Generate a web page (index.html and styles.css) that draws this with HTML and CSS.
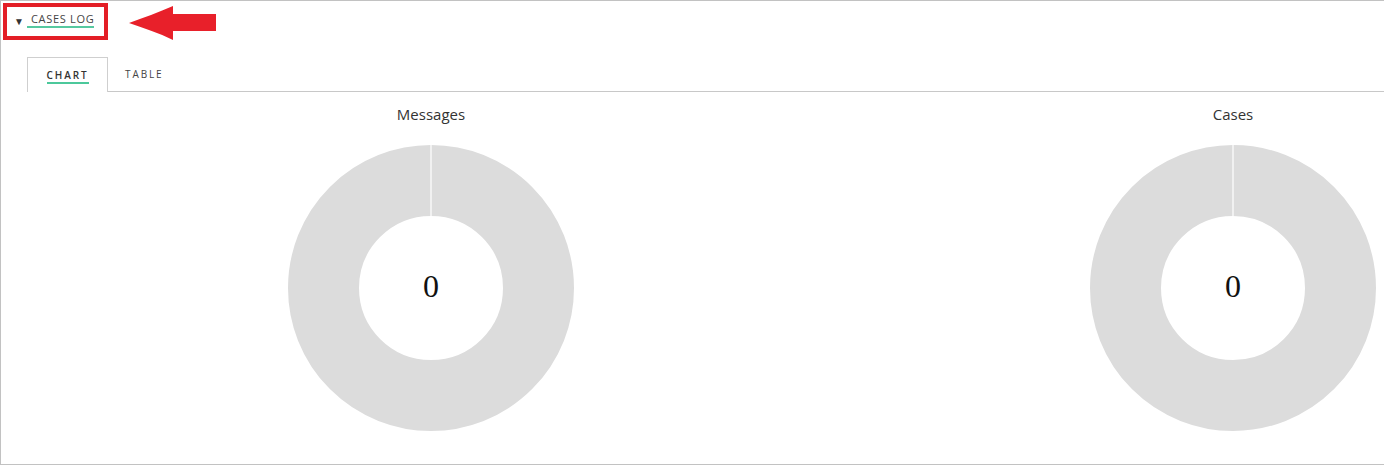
FILE: index.html
```html
<!DOCTYPE html>
<html>
<head>
<meta charset="utf-8">
<link rel="stylesheet" href="styles.css">
</head>
<body>
<div class="panel">
  <div class="header">
    <div class="highlight">
      <span class="caret">▼</span>
      <span class="title-link">CASES LOG</span>
    </div>
    <svg class="arrow" width="90" height="34" viewBox="0 0 90 34">
      <path d="M0 17 C14 12 30 6 44 0 L44 8 L87 8 L87 25 L44 25 L44 34 C30 27 14 22 0 17 Z" fill="#e8202a"/>
    </svg>
  </div>
  <div class="tabs">
    <div class="tab active"><span>CHART</span></div>
    <div class="tab"><span>TABLE</span></div>
  </div>
  <div class="charts">
    <div class="chart">
      <div class="chart-title">Messages</div>
      <div class="donut">
        <svg width="288" height="288" viewBox="0 0 288 288">
          <circle cx="144" cy="144" r="107.5" fill="none" stroke="#dcdcdc" stroke-width="71"/>
          <line x1="144" y1="0" x2="144" y2="72" stroke="#ffffff" stroke-width="1.2"/>
        </svg>
        <div class="donut-value">0</div>
      </div>
    </div>
    <div class="chart">
      <div class="chart-title">Cases</div>
      <div class="donut">
        <svg width="288" height="288" viewBox="0 0 288 288">
          <circle cx="144" cy="144" r="107.5" fill="none" stroke="#dcdcdc" stroke-width="71"/>
          <line x1="144" y1="0" x2="144" y2="72" stroke="#ffffff" stroke-width="1.2"/>
        </svg>
        <div class="donut-value">0</div>
      </div>
    </div>
  </div>
</div>
</body>
</html>
```

FILE: styles.css
```css
html, body {
  margin: 0;
  padding: 0;
  background: #ffffff;
  overflow: hidden;
}

.panel {
  box-sizing: border-box;
  width: 100%;
  height: 465px;
  border: 1px solid #c2c2c2;
  border-right: none;
  overflow: hidden;
  font-family: "Open Sans", "Liberation Sans", sans-serif;
  color: #333;
}

.header {
  display: flex;
  align-items: flex-start;
  padding: 2px 0 0 2px;
}

.highlight {
  box-sizing: border-box;
  width: 105px;
  height: 37px;
  border: 4px solid #e31e26;
  display: flex;
  align-items: center;
  padding: 0 0 2px 7px;
}

.caret {
  font-size: 10px;
  color: #333;
  line-height: 1;
  margin-right: 3px;
}

.title-link {
  font-family: "Open Sans", "Liberation Sans", sans-serif;
  font-size: 11px;
  letter-spacing: 0.7px;
  color: #444;
  padding: 0 0 1px 4px;
  border-bottom: 2px solid #56c9a0;
  line-height: 12px;
}

.arrow {
  margin-left: 21px;
  margin-top: 3px;
}

.tabs {
  display: flex;
  margin: 17px 0 0 26px;
  border-bottom: 1px solid #c8c8c8;
  height: 34px;
}

.tab {
  box-sizing: border-box;
  height: 34px;
  font-size: 10px;
  letter-spacing: 1.9px;
  color: #444;
  display: flex;
  justify-content: center;
  padding-top: 10px;
}

.tab.active {
  width: 81px;
  border: 1px solid #cfcfcf;
  border-bottom: none;
  height: 35px;
  background: #fff;
  padding-top: 11px;
  padding-left: 0;
  font-weight: 600;
  color: #333;
}

.tab.active span {
  height: 12px;
  border-bottom: 2px solid #4cc89b;
  line-height: 12px;
  padding-bottom: 1px;
}

.tab:not(.active) {
  padding-left: 17px;
}

.charts {
  display: grid;
  grid-template-columns: 802px 802px;
  margin-left: 29px;
  margin-top: 12px;
}

.chart {
  display: flex;
  flex-direction: column;
  align-items: center;
}

.chart-title {
  font-size: 15px;
  line-height: 20px;
  color: #333;
  margin-bottom: 20px;
}

.donut {
  position: relative;
  width: 288px;
  height: 288px;
}

.donut svg {
  display: block;
}

.donut-value {
  position: absolute;
  inset: 0;
  display: flex;
  align-items: center;
  justify-content: center;
  font-family: "Liberation Serif", "Times New Roman", serif;
  font-size: 32px;
  color: #111;
  padding-bottom: 4px;
}
```
